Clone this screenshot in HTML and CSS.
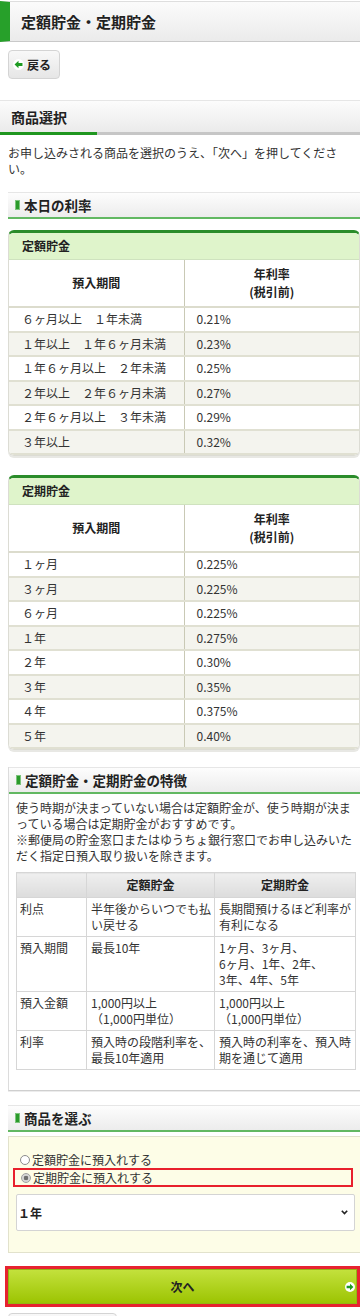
FILE: index.html
```html
<!DOCTYPE html>
<html lang="ja">
<head>
<meta charset="utf-8">
<title>定額貯金・定期貯金</title>
<link rel="stylesheet" href="styles.css">
</head>
<body>
<header class="page-title"><h1>定額貯金・定期貯金</h1></header>

<div class="back-row">
  <a class="back-btn">
    <svg class="btn-ic" width="11" height="11" viewBox="0 0 10 10"><circle cx="5" cy="5" r="5" fill="#fff"/><path d="M1.4 5 L5 1.6 V3.6 H8.6 V6.4 H5 V8.4 Z" fill="#1e9b22"/></svg>
    <span>戻る</span>
  </a>
</div>

<h2 class="step-head">商品選択</h2>
<p class="lead">お申し込みされる商品を選択のうえ、「次へ」を押してください。</p>

<section class="rates">
  <h3 class="sec-head"><span class="sq"></span>本日の利率</h3>

  <div class="rate-card">
    <div class="rate-title">定額貯金</div>
    <table class="rate-table">
      <thead><tr><th>預入期間</th><th>年利率<br>(税引前)</th></tr></thead>
      <tbody>
        <tr><td>６ヶ月以上　１年未満</td><td>0.21%</td></tr>
        <tr><td>１年以上　１年６ヶ月未満</td><td>0.23%</td></tr>
        <tr><td>１年６ヶ月以上　２年未満</td><td>0.25%</td></tr>
        <tr><td>２年以上　２年６ヶ月未満</td><td>0.27%</td></tr>
        <tr><td>２年６ヶ月以上　３年未満</td><td>0.29%</td></tr>
        <tr><td>３年以上</td><td>0.32%</td></tr>
      </tbody>
    </table>
  </div>

  <div class="rate-card second">
    <div class="rate-title">定期貯金</div>
    <table class="rate-table">
      <thead><tr><th>預入期間</th><th>年利率<br>(税引前)</th></tr></thead>
      <tbody>
        <tr><td>１ヶ月</td><td>0.225%</td></tr>
        <tr><td>３ヶ月</td><td>0.225%</td></tr>
        <tr><td>６ヶ月</td><td>0.225%</td></tr>
        <tr><td>１年</td><td>0.275%</td></tr>
        <tr><td>２年</td><td>0.30%</td></tr>
        <tr><td>３年</td><td>0.35%</td></tr>
        <tr><td>４年</td><td>0.375%</td></tr>
        <tr><td>５年</td><td>0.40%</td></tr>
      </tbody>
    </table>
  </div>
</section>

<section class="feature-box">
  <h3 class="sec-head"><span class="sq"></span>定額貯金・定期貯金の特徴</h3>
  <div class="feature-body">
    <p>使う時期が決まっていない場合は定額貯金が、使う時期が決まっている場合は定期貯金がおすすめです。<br>※郵便局の貯金窓口またはゆうちょ銀行窓口でお申し込みいただく指定日預入取り扱いを除きます。</p>
    <table class="feat-table">
      <colgroup><col class="c1"><col class="c2"><col class="c3"></colgroup>
      <thead><tr><th></th><th>定額貯金</th><th>定期貯金</th></tr></thead>
      <tbody>
        <tr><td>利点</td><td>半年後からいつでも払い戻せる</td><td>長期間預けるほど利率が有利になる</td></tr>
        <tr><td>預入期間</td><td>最長10年</td><td>1ヶ月、3ヶ月、<br>6ヶ月、1年、2年、<br>3年、4年、5年</td></tr>
        <tr><td>預入金額</td><td>1,000円以上<br>（1,000円単位）</td><td>1,000円以上<br>（1,000円単位）</td></tr>
        <tr><td>利率</td><td>預入時の段階利率を、最長10年適用</td><td>預入時の利率を、預入時期を通じて適用</td></tr>
      </tbody>
    </table>
  </div>
</section>

<section class="choose">
  <h3 class="sec-head"><span class="sq"></span>商品を選ぶ</h3>
  <div class="choose-body">
    <label class="radio-row"><span class="radio"></span>定額貯金に預入れする</label>
    <label class="radio-row picked"><span class="radio checked"></span>定期貯金に預入れする</label>
    <div class="select"><span>１年</span><svg width="7" height="5" viewBox="0 0 7 5"><path d="M0.8 0.8 L3.5 3.6 L6.2 0.8" fill="none" stroke="#222" stroke-width="1.6"/></svg></div>
  </div>
</section>

<div class="next-wrap">
  <a class="next-btn">
    <span></span>
    <span class="next-label">次へ</span>
    <svg class="next-ic" width="10" height="10" viewBox="0 0 10 10"><circle cx="5" cy="5" r="5" fill="#fff"/><path d="M8.4 5 L5 1.8 V3.7 H1.6 V6.3 H5 V8.2 Z" fill="#1e9b22"/></svg>
  </a>
</div>

<div class="sub-btn" aria-hidden="true"></div>
</body>
</html>
```

FILE: styles.css
```css
* { box-sizing: border-box; }
html, body { margin: 0; padding: 0; }
body {
  font-family: "Noto Sans CJK JP", "Noto Sans", sans-serif;
  font-size: 12px;
  line-height: 16px;
  color: #333;
  background: #fff;
  width: 360px;
  overflow-x: hidden;
}
h1, h2, h3, p { margin: 0; font-size: inherit; font-weight: inherit; }

.page-title {
  margin-top: 1px;
  border-top: 1px solid #dedede;
  border-bottom: 1px solid #c9c9c9;
  border-left: 10px solid #27a02a;
  background: linear-gradient(#fbfbfb, #ebebeb);
  padding-left: 11px;
}
.page-title h1 { font-size: 15px; font-weight: bold; line-height: 39px; color: #222; }

.back-row { padding: 8px 8px 0; display: flex; }
.back-btn {
  display: flex; align-items: center; gap: 3px;
  height: 29px; width: 52px; padding-left: 4px;
  border: 1px solid #d4d4d4; border-radius: 4px;
  background: linear-gradient(#f8f8f8, #e6e6e6);
  font-weight: bold; font-size: 12px; color: #222;
}
.btn-ic { flex: none; }

.step-head {
  margin-top: 21px;
  border-top: 1px solid #e6e6e6;
  padding: 8px 11px 10px;
  font-size: 14px; line-height: 16px; font-weight: bold; color: #222;
  background:
    linear-gradient(to right, #1f961f 97px, #c6c6c6 97px) left bottom / 100% 3px no-repeat,
    linear-gradient(#fcfcfc, #e9e9e9);
}
.lead { margin-top: 10px; padding: 0 8px; }

.sec-head {
  display: flex; align-items: center;
  border-top: 1px solid #e6e6e6;
  border-bottom: 2px solid #62b862;
  padding: 4px 8px 4px 7px;
  background: linear-gradient(#fdfdfd, #ececec);
  font-size: 13.5px; font-weight: bold; line-height: 16px; color: #222;
}
.sq { flex: none; width: 5px; height: 10px; background: #2a9a2a; border: 1px solid #7cc47c; margin-right: 4px; }

.rates { margin: 15px 0 0 8px; }
.rate-card {
  margin-top: 11px;
  border: 1px solid #dcdcd4;
  border-top: 3px solid #2a8c2a;
  border-radius: 6px;
  overflow: hidden;
  box-shadow: 0 2px 0 #e8e8e4;
}
.rate-card.second { margin-top: 19px; }
.rate-title {
  background: #dff4cb;
  padding: 5px 13px;
  border-bottom: 1px solid #cfe2bf;
  font-weight: bold; line-height: 16px; color: #222;
}
.rate-table { width: 100%; border-collapse: collapse; table-layout: fixed; }
.rate-table th {
  font-weight: bold; line-height: 18px; padding: 5px 4px;
  border-bottom: 2px solid #dcdccd; text-align: center; color: #222; background: #fff;
}
.rate-table td {
  line-height: 16px; padding: 3px 8px 3.5px 12px;
  border-bottom: 2px solid #e0e0d2; white-space: nowrap;
}
.rate-table th:first-child, .rate-table td:first-child { border-right: 1px solid #c9c9b5; }
.rate-table td:first-child { padding-left: 13px; }
.rate-table tbody tr:nth-child(even) td { background: #f4f4ee; }

.feature-box {
  margin: 17px 0 0 8px;
  border-left: 1px solid #dcdcdc;
  border-bottom: 1px solid #cfcfcf;
  box-shadow: 0 1px 0 #ececec;
}
.feature-body { padding: 6px 5px 20px 7px; }
.feat-table { width: 100%; border-collapse: collapse; table-layout: fixed; margin-top: 8px; }
.feat-table col.c1 { width: 70px; }
.feat-table col.c2 { width: 128px; }
.feat-table col.c3 { width: 141px; }
.feat-table th, .feat-table td {
  border: 1px solid #d6d6d6; padding: 3px 3px; line-height: 16px;
  vertical-align: top; text-align: left;
}
.feat-table td + td { padding-left: 4px; }
.feat-table th {
  background: linear-gradient(#efefef, #dcdcdc);
  text-align: center; font-weight: bold; padding: 4px 3px; color: #222;
}

.choose { margin: 14px 0 0 8px; }
.choose-body {
  margin-top: 4px;
  border: 1px solid #e2e2cc; border-right: none;
  background: #fdfde7;
  padding: 15px 5px 21px 0;
}
.radio-row { display: flex; align-items: center; gap: 2px; padding-left: 11px; line-height: 16px; }
.radio-row.picked {
  margin: 0 2px 0 4px;
  border: 2px solid #e8202c;
  padding-left: 6px;
  line-height: 15px;
}
.radio { flex: none; width: 10px; height: 10px; border-radius: 50%; border: 1px solid #8c8c8c; background: #fff; }
.radio.checked { border-color: #a0a0a0; background: radial-gradient(circle, #6e6e6e 0 2px, #d6d6d6 2.6px); }
.select {
  margin: 7px 0 0 7px;
  height: 37px;
  border: 1px solid #d4d4d4; border-radius: 2px;
  background: #fff;
  display: flex; align-items: center; justify-content: space-between;
  padding: 0 6px 0 1px;
  font-weight: bold; font-size: 12px; color: #222;
}

.next-wrap { margin: 13px 0 0 5px; border: 3px solid #e62330; }
.next-btn {
  display: grid; grid-template-columns: 1fr auto 1fr; align-items: center;
  height: 35px;
  background: linear-gradient(#c3e13c, #9cc402);
  border: 1px solid #93b612;
  font-weight: bold; color: #222;
}
.next-ic { justify-self: end; margin-right: 1px; }

.sub-btn {
  margin: 6px 0 0 8px; width: 109px; height: 30px;
  border: 1px solid #d4d4d4; border-radius: 4px;
  background: linear-gradient(#f8f8f8, #e6e6e6);
}
```
